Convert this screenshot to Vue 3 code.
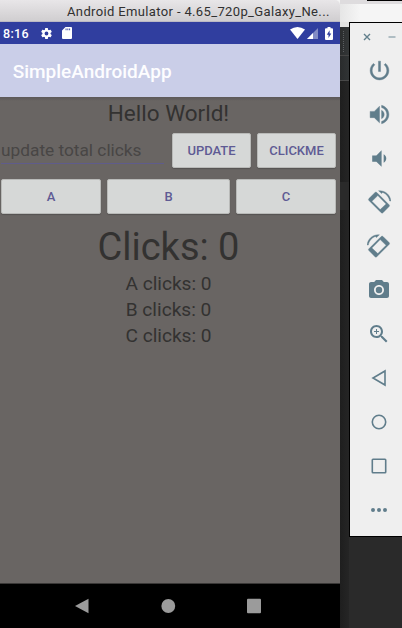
<script setup>
const rotatePaths = [
  'M8 2.5 1.9 8.6Q1 9.5 1.9 10.4L14.2 22.7Q15.1 23.6 16 22.7L22.1 16.6Q23 15.7 22.1 14.8L9.8 2.5Q8.9 1.6 8 2.5zM10.8 5.6 19.1 13.9 13.2 19.6 4.9 11.3z',
  'M11.6.8C18 .2 23.4 4.8 23.9 11h-1.2C22 6.9 19.3 3.6 15.6 2.4L14.6 3.6z',
]
const tools = [
  { name: 'power', size: 25, bold: true, paths: ['M13 3h-2v10h2V3zm4.83 2.17-1.42 1.42C17.99 7.86 19 9.81 19 12c0 3.87-3.13 7-7 7s-7-3.13-7-7c0-2.19 1.01-4.14 2.58-5.42L6.17 5.17C4.23 6.82 3 9.26 3 12c0 4.97 4.03 9 9 9s9-4.03 9-9c0-2.74-1.23-5.18-3.17-6.83z'] },
  { name: 'volume up', size: 25, bold: true, paths: ['M3 9v6h4l5 5V4L7 9H3zm13.5 3c0-1.77-1.02-3.29-2.5-4.03v8.05c1.48-.73 2.5-2.25 2.5-4.02zM14 3.23v2.06c2.89.86 5 3.54 5 6.71s-2.11 5.85-5 6.71v2.06c4.01-.91 7-4.49 7-8.77s-2.99-7.86-7-8.77z'] },
  { name: 'volume down', size: 25, paths: ['M18.5 12c0-1.77-1.02-3.29-2.5-4.03v8.05c1.48-.73 2.5-2.25 2.5-4.02zM5 9v6h4l5 5V4L9 9H5z'] },
  { name: 'rotate left', size: 24, bold: true, paths: rotatePaths },
  { name: 'rotate right', size: 24, flip: true, bold: true, paths: rotatePaths },
  { name: 'camera', size: 24, paths: ['M9 2 7.17 4H4c-1.1 0-2 .9-2 2v12c0 1.1.9 2 2 2h16c1.1 0 2-.9 2-2V6c0-1.1-.9-2-2-2h-3.17L15 2H9zm3 15c-2.76 0-5-2.24-5-5s2.24-5 5-5 5 2.24 5 5-2.24 5-5 5z', 'M12 8.8a3.2 3.2 0 1 0 0 6.4 3.2 3.2 0 0 0 0-6.4z'] },
  { name: 'zoom', size: 24, paths: ['M15.5 14h-.79l-.28-.27C15.41 12.59 16 11.11 16 9.5 16 5.91 13.09 3 9.5 3S3 5.91 3 9.5 5.91 16 9.5 16c1.61 0 3.09-.59 4.23-1.57l.27.28v.79l5 4.99L20.49 19l-4.99-5zm-6 0C7.01 14 5 11.99 5 9.5S7.01 5 9.5 5 14 7.01 14 9.5 11.99 14 9.5 14zM9 7v2H7v1h2v2h1v-2h2V9h-2V7z'] },
  { name: 'back', size: 24, stroke: true, paths: ['M18 5v14L6 12z'] },
  { name: 'home', size: 24, stroke: true, paths: ['M12 5.3a6.7 6.7 0 1 0 0 13.4 6.7 6.7 0 0 0 0-13.4z'] },
  { name: 'overview', size: 24, stroke: true, paths: ['M6 5.3h12q.7 0 .7.7v12q0 .7-.7.7H6q-.7 0-.7-.7V6q0-.7.7-.7z'] },
  { name: 'more', size: 24, paths: ['M6 10a2 2 0 1 0 0 4 2 2 0 0 0 0-4zm6 0a2 2 0 1 0 0 4 2 2 0 0 0 0-4zm6 0a2 2 0 1 0 0 4 2 2 0 0 0 0-4z'] },
]
const counts = ['A', 'B', 'C']
</script>

<template>
  <div class="desktop">
    <main class="emulator">
      <header class="titlebar"><span>Android Emulator - 4.65_720p_Galaxy_Ne...</span></header>
      <div class="status">
        <span class="time">8:16</span>
        <svg class="gear" viewBox="0 0 24 24"><path d="M19.43 12.98c.04-.32.07-.64.07-.98s-.03-.66-.07-.98l2.11-1.65c.19-.15.24-.42.12-.64l-2-3.46c-.12-.22-.39-.3-.61-.22l-2.49 1c-.52-.4-1.08-.73-1.69-.98l-.38-2.65C14.46 2.18 14.25 2 14 2h-4c-.25 0-.46.18-.49.42l-.38 2.65c-.61.25-1.17.59-1.69.98l-2.49-1c-.23-.09-.49 0-.61.22l-2 3.46c-.13.22-.07.49.12.64l2.11 1.65c-.04.32-.07.65-.07.98s.03.66.07.98l-2.11 1.65c-.19.15-.24.42-.12.64l2 3.46c.12.22.39.3.61.22l2.49-1c.52.4 1.08.73 1.69.98l.38 2.65c.03.24.24.42.49.42h4c.25 0 .46-.18.49-.42l.38-2.65c.61-.25 1.17-.59 1.69-.98l2.49 1c.23.09.49 0 .61-.22l2-3.46c.12-.22.07-.49-.12-.64l-2.11-1.65zM12 15.5a3.5 3.5 0 1 1 0-7 3.5 3.5 0 0 1 0 7z" /></svg>
        <svg class="card" viewBox="0 0 10 12"><path d="M3.5 0H9q1 0 1 1v10q0 1-1 1H1q-1 0-1-1V3.5zM3.6 1.6v1.7h.9V1.6zm1.8 0v1.7h.9V1.6zm1.8 0v1.7h.9V1.6z" fill-rule="evenodd" /></svg>
        <div class="signals">
          <svg class="wifi" viewBox="0 0 15 12"><path d="M0 2.5Q7.5-2.5 15 2.5L7.5 12z" /></svg>
          <svg class="cell" viewBox="0 0 11 11"><path d="M11 0v11H0z" opacity=".4" /><path d="M6 5v6H0z" /></svg>
          <svg class="battery" viewBox="0 0 8 13"><path d="M2.5 0h3v1.3H7q1 0 1 1V12q0 1-1 1H1q-1 0-1-1V2.3q0-1 1-1h1.5zM4.6 3.2 1.8 7.7h1.7v3.2l2.8-4.5H4.6z" fill-rule="evenodd" /></svg>
        </div>
      </div>
      <div class="appbar"><h1>SimpleAndroidApp</h1></div>
      <section class="content">
        <p class="hello">Hello World!</p>
        <div class="row entry">
          <div class="field"><span>update total clicks</span></div>
          <button class="update">UPDATE</button>
          <button class="clickme">CLICKME</button>
        </div>
        <div class="row letters">
          <button>A</button>
          <button>B</button>
          <button>C</button>
        </div>
        <p class="total">Clicks: 0</p>
        <p v-for="c in counts" :key="c" class="count">{{ c }} clicks: 0</p>
      </section>
      <nav class="navbar">
        <svg viewBox="0 0 16 16"><path d="M14.5.8v14.4L1 8z" /></svg>
        <svg viewBox="0 0 16 16"><circle cx="8.3" cy="8" r="6.9" /></svg>
        <svg viewBox="0 0 16 16"><rect x="1" y=".8" width="14" height="14.4" rx="1" /></svg>
      </nav>
    </main>
    <div class="side">
      <div class="behind"><div class="behind-tab"></div></div>
      <div class="gutter"><i class="g1"></i><i class="g2"></i><i class="g3"></i><i class="g4"></i><i class="g5"></i></div>
      <aside class="toolbar">
        <div class="controls">
          <svg class="close" viewBox="0 0 8 8"><path d="M1 1l6 6M7 1L1 7" /></svg>
          <svg class="minimize" viewBox="0 0 8 8"><path d="M0.5 4h7" /></svg>
        </div>
        <div v-for="t in tools" :key="t.name" class="tool">
          <svg :class="{ outline: t.stroke, flip: t.flip, bold: t.bold }" :width="t.size" :height="t.size" viewBox="0 0 24 24">
            <path v-for="p in t.paths" :key="p" :d="p" fill-rule="evenodd" />
          </svg>
        </div>
      </aside>
    </div>
  </div>
</template>

<style>
body { margin: 0; background: #2a2a2a; overflow: hidden; }
</style>
<style scoped>
* { box-sizing: border-box; }
svg { display: block; flex: none; }
h1, p { margin: 0; font-weight: 400; }
.desktop { display: flex; width: 402px; height: 628px; overflow: hidden; background: #2a2a2a; font-family: Roboto, sans-serif; }
.emulator { display: flex; flex-direction: column; width: 340px; flex: none; background: linear-gradient(#f3f3f3 22px, #696563 22px); }
.titlebar { height: 22px; flex: none; padding-left: 67px; background: linear-gradient(#e8e6e8, #d0ced0); border-bottom: 1px solid #bbb9c4; border-radius: 0 5px 0 0; color: #303030; font-size: 13px; line-height: 23px; white-space: nowrap; letter-spacing: .36px; }
.status { display: flex; align-items: center; height: 22px; flex: none; padding: 0 7px 0 3px; background: #303e9f; color: #fff; }
.status svg { fill: #fff; }
.time { width: 37px; font-size: 12.5px; font-weight: 500; letter-spacing: .35px; }
.gear { width: 13px; height: 13px; }
.card { width: 10px; height: 12px; margin-left: 9px; }
.signals { display: flex; align-items: center; margin-left: auto; }
.wifi { width: 15px; height: 12px; }
.cell { width: 11px; height: 11px; margin: 0 7px 0 2px; }
.battery { width: 8px; height: 13px; }
.appbar { display: flex; align-items: center; height: 53px; flex: none; padding-left: 12.7px; background: #cacee8; color: #fdfdff; }
h1 { font-size: 19px; font-weight: 500; line-height: 22px; padding-top: 2px; }
.content { display: flex; flex-direction: column; height: 487px; flex: none; background: linear-gradient(#5d5959, #696563 4px); border-bottom: 1px solid #3a3837; color: #333231; text-align: center; }
.hello { height: 36px; padding: 3px 3px 0 0; font-size: 22.5px; line-height: 26px; }
.row { display: flex; height: 35px; flex: none; padding: 0 4px 0 1px; }
.field { display: flex; align-items: center; width: 163px; height: 31px; margin-right: 8px; padding-top: 4px; border-bottom: 1px solid #5f5c8c; color: #484645; font-size: 17.3px; }
button { height: 35px; padding: 0; border: 1px solid #b9bab8; border-radius: 2px; background: #d6d8d7; color: #5f5b94; font: 500 13px/33px Roboto, sans-serif; box-shadow: 0 1px 1px #565352; }
.update { width: 79px; margin-right: 6px; }
.clickme { width: 79px; }
.letters { display: grid; grid-template-columns: 100px 123px 100px; gap: 6px; margin-top: 11px; }
.total { height: 49px; margin-top: 8.4px; padding: 1px 3px 0 0; font-size: 38px; line-height: 49px; }
.count { height: 25.6px; padding-right: 3px; font-size: 19.1px; line-height: 26px; }
.navbar { display: flex; justify-content: space-between; align-items: center; height: 44px; padding: 0 78px 0 74px; background: #000; }
.navbar svg { width: 16px; height: 16px; fill: #9b9b9b; }
.side { display: grid; grid-template-columns: 9px 53px; grid-template-rows: 22px 606px; flex: none; width: 62px; }
.behind { grid-column: 1 / 3; height: 22px; padding-top: 4px; background: linear-gradient(90deg, #dedcde 27px, #000 27px) 0 0 / 100% 1px no-repeat, #dedcde; }
.behind-tab { height: 18px; background: linear-gradient(90deg, #e6e6e6, #f5f5f5 20px); }
.gutter { display: flex; flex-direction: column; background: linear-gradient(90deg, #1e1e1e, #252525); }
.gutter i { flex: none; }
.g1 { height: 5px; background: #e2e2e2; }
.g2 { height: 29px; background: repeating-linear-gradient(#5b5e60 0 1px, transparent 1px 2px) 3px 4px / 1px 22px no-repeat, linear-gradient(90deg, #2b2d2e, #333637); border-bottom: 1px solid #444; }
.g3 { height: 25px; background: linear-gradient(90deg, #292b2c, #313435); border-bottom: 1px solid #484848; }
.g4 { height: 101px; }
.g5 { height: 28px; background: #2a2a2a; }
.toolbar { height: 515px; border: solid #000; border-width: 1px 0 1px 1px; background: #efefef; }
.controls { display: flex; height: 25px; padding: 10px 0 0 13px; gap: 17px; }
.controls svg { width: 8px; height: 8px; fill: none; stroke: #627f8c; stroke-width: 1.4; }
.controls .minimize { stroke: #94a8b1; }
.tool { display: flex; align-items: center; justify-content: center; height: 44px; padding-left: 6px; }
.tool svg { fill: #607d8b; }
.tool .bold { stroke: #607d8b; stroke-width: .4; }
.tool .outline { fill: none; stroke: #607d8b; stroke-width: 1.6; }
.tool .flip { transform: scaleX(-1); }
</style>
